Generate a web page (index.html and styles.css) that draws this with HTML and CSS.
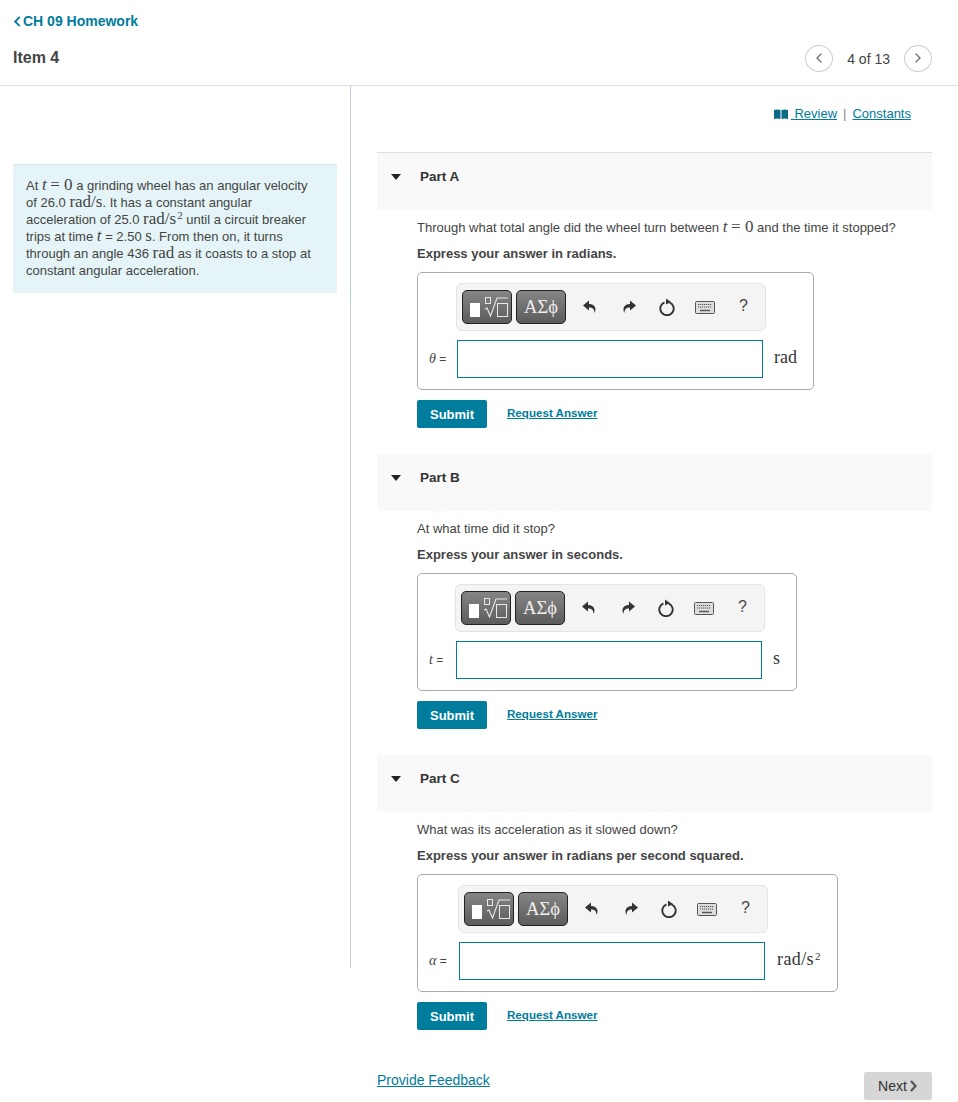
FILE: index.html
```html
<!DOCTYPE html>
<html lang="en">
<head>
  <meta charset="UTF-8" />
  <title>Item 4 - CH 09 Homework</title>
  <link rel="stylesheet" href="styles.css">
</head>
<body>
  <svg class="sprites" width="0" height="0" aria-hidden="true">
    <symbol id="tpl" viewBox="0 0 48 32">
      <rect x="7" y="12" width="10" height="14" fill="#fff"/>
      <rect x="22.500" y="6.500" width="5" height="6" fill="none" stroke="#e8e8e8"/>
      <path d="M22 18l2-1 3.500 8 6.500-18h11" fill="none" stroke="#e8e8e8" stroke-width="1.100"/>
      <rect x="34.500" y="12.500" width="10" height="13" fill="none" stroke="#e8e8e8"/>
    </symbol>
    <symbol id="undo" viewBox="0 0 16 16">
      <path d="M7 1.500L1 6.500l6 5V8.600c3.400 0 5.300 1.200 5.600 5.400 1.800-3.800 1.300-8.600-5.600-9z" fill="#333"/>
    </symbol>
    <symbol id="redo" viewBox="0 0 16 16">
      <path d="M9 1.500l6 5-6 5V8.600c-3.400 0-5.300 1.200-5.600 5.400C1.600 10.200 2.100 5.400 9 5z" fill="#333"/>
    </symbol>
    <symbol id="reset" viewBox="0 0 18 18">
      <path d="M6.500 4.300a6.700 6.700 0 1 0 5 0" fill="none" stroke="#333" stroke-width="1.900"/>
      <path d="M8 .5l5 3.500-5 2.500z" fill="#333"/>
    </symbol>
    <symbol id="keys" viewBox="0 0 20 13">
      <rect x=".5" y=".5" width="19" height="12" rx="1" fill="#ddd" stroke="#555"/>
      <path d="M3 3.500h14M3 6h14" stroke="#555" stroke-width="1.200" stroke-dasharray="1.200 .8"/>
      <path d="M5 9.500h10" stroke="#555" stroke-width="1.400"/>
    </symbol>
  </svg>

  <header class="top">
    <a class="back" href="#"><svg class="back-arrow" viewBox="0 0 8 12" width="8" height="11"><path d="M7 1L2 6l5 5" fill="none" stroke="#007c9c" stroke-width="2"/></svg>CH 09 Homework</a>
    <div class="title-row">
      <h1>Item 4</h1>
      <div class="pager">
        <span class="circle"><svg viewBox="0 0 10 14" width="8" height="12"><path d="M8 1.500L2.500 7 8 12.500" fill="none" stroke="#666" stroke-width="1.600"/></svg></span>
        <span class="count">4 of 13</span>
        <span class="circle"><svg viewBox="0 0 10 14" width="8" height="12"><path d="M2 1.500L7.500 7 2 12.500" fill="none" stroke="#666" stroke-width="1.600"/></svg></span>
      </div>
    </div>
  </header>

  <div class="main">
    <aside class="left">
      <div class="intro">
        <p>At <i class="mi">t</i> <span class="mn">= 0</span> a grinding wheel has an angular velocity<br>of 26.0 <span class="mn">rad/s</span>. It has a constant angular<br>acceleration of 25.0 <span class="mn">rad/s<sup>2</sup></span> until a circuit breaker<br>trips at time <i class="mi">t</i> = 2.50 <span class="mn">s</span>. From then on, it turns<br>through an angle 436 <span class="mn">rad</span> as it coasts to a stop at<br>constant angular acceleration.</p>
      </div>
    </aside>

    <section class="right">
      <div class="links">
        <svg class="book" viewBox="0 0 14 10" width="14" height="10"><path d="M0 1c2-.8 4.500-.8 6.500 0v9C4.500 9.200 2 9.200 0 10zM7.500 1c2-.8 4.500-.8 6.500 0v9c-2-.8-4.500-.8-6.500 0z" fill="#0b6a84"/></svg>
        <a href="#">&nbsp;Review</a> <span class="sep">|</span> <a href="#">Constants</a>
      </div>

      <div class="part first">
        <div class="part-head"><span class="caret"></span><h2>Part A</h2></div>
        <div class="part-body">
          <p class="question">Through what total angle did the wheel turn between <i class="mi">t</i> <span class="mn">= 0</span> and the time it stopped?</p>
          <p class="express">Express your answer in radians.</p>
          <div class="answer">
            <div class="toolbar">
              <span class="tbtn tbtn-tpl"><svg width="48" height="32"><use href="#tpl"/></svg></span>
              <span class="tbtn tbtn-sym">ΑΣϕ</span>
              <svg class="ic ic-undo" width="16" height="16"><use href="#undo"/></svg>
              <svg class="ic ic-redo" width="16" height="16"><use href="#redo"/></svg>
              <svg class="ic ic-reset" width="18" height="18"><use href="#reset"/></svg>
              <svg class="ic ic-keys" width="20" height="13"><use href="#keys"/></svg>
              <span class="help">?</span>
            </div>
            <label class="var"><i>θ</i> =</label>
            <div class="field"></div>
            <span class="unit">rad</span>
          </div>
          <div class="actions"><button class="submit">Submit</button><a class="request" href="#">Request Answer</a></div>
        </div>
      </div>

      <div class="part">
        <div class="part-head"><span class="caret"></span><h2>Part B</h2></div>
        <div class="part-body">
          <p class="question">At what time did it stop?</p>
          <p class="express">Express your answer in seconds.</p>
          <div class="answer">
            <div class="toolbar">
              <span class="tbtn tbtn-tpl"><svg width="48" height="32"><use href="#tpl"/></svg></span>
              <span class="tbtn tbtn-sym">ΑΣϕ</span>
              <svg class="ic ic-undo" width="16" height="16"><use href="#undo"/></svg>
              <svg class="ic ic-redo" width="16" height="16"><use href="#redo"/></svg>
              <svg class="ic ic-reset" width="18" height="18"><use href="#reset"/></svg>
              <svg class="ic ic-keys" width="20" height="13"><use href="#keys"/></svg>
              <span class="help">?</span>
            </div>
            <label class="var var-t"><i>t</i> =</label>
            <div class="field"></div>
            <span class="unit">s</span>
          </div>
          <div class="actions"><button class="submit">Submit</button><a class="request" href="#">Request Answer</a></div>
        </div>
      </div>

      <div class="part">
        <div class="part-head"><span class="caret"></span><h2>Part C</h2></div>
        <div class="part-body">
          <p class="question">What was its acceleration as it slowed down?</p>
          <p class="express">Express your answer in radians per second squared.</p>
          <div class="answer">
            <div class="toolbar">
              <span class="tbtn tbtn-tpl"><svg width="48" height="32"><use href="#tpl"/></svg></span>
              <span class="tbtn tbtn-sym">ΑΣϕ</span>
              <svg class="ic ic-undo" width="16" height="16"><use href="#undo"/></svg>
              <svg class="ic ic-redo" width="16" height="16"><use href="#redo"/></svg>
              <svg class="ic ic-reset" width="18" height="18"><use href="#reset"/></svg>
              <svg class="ic ic-keys" width="20" height="13"><use href="#keys"/></svg>
              <span class="help">?</span>
            </div>
            <label class="var var-a"><i>α</i> =</label>
            <div class="field"></div>
            <span class="unit unit-wide">rad/s<sup>2</sup></span>
          </div>
          <div class="actions"><button class="submit">Submit</button><a class="request" href="#">Request Answer</a></div>
        </div>
      </div>

      <div class="foot">
        <a class="feedback" href="#">Provide Feedback</a>
        <button class="next">Next<svg viewBox="0 0 8 12" width="9" height="12"><path d="M1.500 1L6 6l-4.500 5" fill="none" stroke="#555" stroke-width="2.200"/></svg></button>
      </div>
    </section>
  </div>
</body>
</html>
```

FILE: styles.css
```css
* {
  box-sizing: border-box;
}

body {
  margin: 0;
  height: 1102px;
  overflow: hidden;
  font-family: "Liberation Sans", Arial, sans-serif;
  font-size: 13px;
  color: #444;
  background: #fff;
}

a {
  color: #007c9c;
}

p {
  margin: 0;
}

.sprites {
  position: absolute;
}

.top {
  height: 86px;
  padding: 13px 26px 0 13px;
  border-bottom: 1px solid #ddd;
}

.back {
  display: flex;
  align-items: center;
  gap: 2px;
  height: 16px;
  font-size: 14px;
  font-weight: bold;
  text-decoration: none;
}

.title-row {
  display: flex;
  justify-content: space-between;
  align-items: center;
  margin-top: 14px;
  height: 30px;
}

h1 {
  margin: 0;
  font-size: 16px;
  color: #444;
}

.pager {
  display: flex;
  align-items: center;
  font-size: 14px;
  color: #444;
}

.count {
  margin: 2px 14px 0;
}

.circle {
  display: flex;
  align-items: center;
  justify-content: center;
  width: 28px;
  height: 27px;
  border: 1px solid #ccc;
  border-radius: 50%;
}

.main {
  display: flex;
}

.left {
  width: 351px;
  height: 882px;
  flex-shrink: 0;
  padding: 78px 13px 0;
  border-right: 1px solid #bcd0e0;
}

.intro {
  width: 324px;
  height: 129px;
  padding: 12px 0 0 13px;
  background: #e5f5f7;
  border-top: 1px solid #d9e4e6;
  line-height: 17px;
  color: #444;
  white-space: nowrap;
}

sup {
  margin-left: 1px;
  font-size: 11px;
  line-height: 0;
  vertical-align: 5px;
}

.mi,
.mn {
  font-family: "Liberation Serif", serif;
  font-size: 17px;
  line-height: 0;
}

.right {
  width: 555px;
  margin-left: 26px;
}

.links {
  display: flex;
  align-items: center;
  justify-content: flex-end;
  gap: 4px;
  height: 66px;
  padding: 0 21px 11px 0;
  white-space: pre;
}

.book {
  margin-right: -1px;
}

.sep {
  color: #888;
  margin: 0 2px;
}

.part-head {
  display: flex;
  align-items: flex-start;
  height: 57px;
  padding: 15px 0 0 14px;
  background: #f9f9f9;
}

.first .part-head {
  height: 58px;
  border-top: 1px solid #ddd;
}

.caret {
  width: 0;
  height: 0;
  margin: 6px 19px 0 0;
  border-left: 5.500px solid transparent;
  border-right: 5.500px solid transparent;
  border-top: 6px solid #222;
}

h2 {
  margin: 0;
  font-size: 13.500px;
  line-height: 17px;
  color: #333;
}

.part-body {
  padding: 10px 0 26px 40px;
}

.question {
  height: 16px;
  line-height: 16px;
  white-space: nowrap;
}

.express {
  margin-top: 10px;
  height: 16px;
  line-height: 16px;
  font-weight: bold;
}

.answer {
  display: inline-grid;
  grid-template-columns: auto auto auto;
  align-items: center;
  margin-top: 10px;
  padding: 10px 16px 11px 0;
  border: 1px solid #aaa;
  border-radius: 5px;
  vertical-align: top;
}

.toolbar {
  grid-column: 2 / 4;
  display: flex;
  align-items: center;
  width: 310px;
  height: 48px;
  margin: 0 0 9px -1px;
  padding-left: 5px;
  background: #f4f4f4;
  border: 1px solid #e4e4e4;
  border-radius: 6px;
}

.tbtn {
  display: flex;
  align-items: center;
  justify-content: center;
  width: 50px;
  height: 34px;
  margin-right: 4px;
  border: 1px solid #222;
  border-radius: 5px;
  background: linear-gradient(#858585, #5c5c5c);
  color: #eee;
  flex-shrink: 0;
}

.tbtn-sym {
  margin-right: 0;
  font-family: "Liberation Serif", serif;
  font-size: 18.500px;
}

.ic-undo {
  margin-left: 16px;
}

.ic-redo {
  margin-left: 23px;
}

.ic-reset {
  margin-left: 21px;
}

.ic-keys {
  margin-left: 19px;
}

.help {
  margin: -2px 0 0 24px;
  font-size: 16px;
  color: #444;
}

.var {
  width: 39px;
  padding-left: 11px;
  font-size: 12px;
  color: #444;
  white-space: nowrap;
}

.var i {
  font-family: "Liberation Serif", serif;
  font-size: 14px;
}

.var-t {
  width: 38px;
}

.var-a {
  width: 41px;
}

.field {
  width: 306px;
  height: 38px;
  border: 1px solid #007c9c;
  background: #fff;
}

.unit {
  margin: -3px 0 0 11px;
  font-family: "Liberation Serif", serif;
  font-size: 18px;
  color: #333;
}

.unit-wide {
  margin-left: 12px;
  letter-spacing: .4px;
}

.actions {
  display: flex;
  align-items: center;
  margin-top: 10px;
}

.submit {
  width: 70px;
  height: 28px;
  padding: 0;
  border: 0;
  border-radius: 2px;
  background: #007c9c;
  color: #fff;
  font-family: inherit;
  font-size: 13px;
  font-weight: bold;
}

.request {
  margin: -3px 0 0 20px;
  font-size: 11.600px;
  font-weight: bold;
}

.foot {
  display: flex;
  justify-content: space-between;
  align-items: flex-start;
  margin-top: 16px;
}

.feedback {
  font-size: 14px;
}

.next {
  display: flex;
  align-items: center;
  justify-content: center;
  gap: 2px;
  width: 68px;
  height: 28px;
  padding: 0;
  border: 0;
  border-radius: 2px;
  background: #d6d6d6;
  color: #333;
  font-family: inherit;
  font-size: 14px;
}
```
